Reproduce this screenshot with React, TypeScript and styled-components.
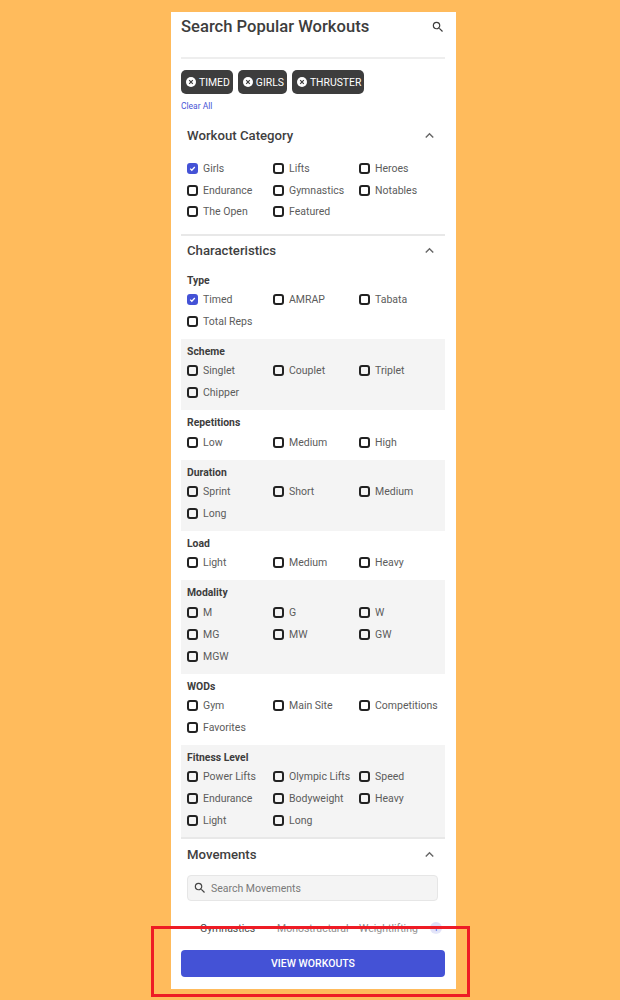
import React, { FC } from 'react';
import styled, { createGlobalStyle } from 'styled-components';
import { MdExpandLess, MdSearch } from 'react-icons/md';

const GlobalStyle = createGlobalStyle`
  html, body {
    margin: 0;
    padding: 0;
    background: #ffbb5c;
  }
  * {
    box-sizing: border-box;
  }
`;

const Page = styled.div`
  position: relative;
  width: 620px;
  height: 1000px;
  overflow: hidden;
  padding: 12px 0 0 171px;
  background: #ffbb5c;
  font-family: Roboto, 'Liberation Sans', sans-serif;
`;

const Panel = styled.div`
  position: relative;
  width: 285px;
  height: 977px;
  padding: 0 11px 0 10px;
  overflow: hidden;
  background: #fff;
`;

const TopBar = styled.div`
  display: flex;
  align-items: center;
  justify-content: space-between;
  height: 47px;
  padding: 0 0 15px 0;
  border-bottom: 2px solid #eeeeee;
  color: #3d3d3d;
`;

const Title = styled.h1`
  margin: 0;
  font-size: 16.6px;
  line-height: 30px;
  font-weight: 500;
  color: #3d3d3d;
`;

const Chips = styled.div`
  display: flex;
  gap: 5px;
  margin-top: 11px;
`;

const Chip = styled.div`
  display: flex;
  align-items: center;
  gap: 3px;
  height: 24px;
  padding: 0 3px 0 5px;
  border-radius: 5px;
  background: #3d3d3d;
  color: #fff;
  font-size: 10.4px;
`;

const ClearAll = styled.a`
  display: block;
  margin-top: 6px;
  font-size: 8.5px;
  line-height: 12px;
  color: #4a55d6;
`;

const SectionHeader = styled.div`
  display: flex;
  align-items: center;
  justify-content: space-between;
  height: 32px;
  padding: 0 7px 2px 6px;
  color: #666;
`;

const SectionTitle = styled.h2`
  margin: 0;
  font-size: 13.2px;
  font-weight: 500;
  color: #3f3f3f;
`;

const CategorySection = styled.section`
  margin-top: 8px;
  padding-bottom: 11px;
  border-bottom: 2px solid #e8e8e8;
`;

const CategoryOptions = styled.div`
  padding: 6px 6px 0;
`;

const Group = styled.div<{ $shaded?: boolean }>`
  padding: 6px 6px 6.35px;
  background: ${p => (p.$shaded ? '#f4f4f4' : '#fff')};
`;

const GroupLabel = styled.div`
  height: 15px;
  font-size: 10.4px;
  line-height: 14px;
  font-weight: 700;
  color: #3d3d3d;
`;

const OptionGrid = styled.div<{ $rowHeight: number }>`
  display: grid;
  grid-template-columns: repeat(3, 86px);
  grid-auto-rows: ${p => p.$rowHeight}px;
`;

const Option = styled.label`
  display: flex;
  align-items: center;
  gap: 5px;
  font-size: 10.5px;
  color: #5c5c5c;
  white-space: nowrap;
`;

const Box = styled.span<{ $checked?: boolean }>`
  display: flex;
  align-items: center;
  justify-content: center;
  flex: none;
  width: 11px;
  height: 11px;
  border-radius: 3px;
  border: ${p => (p.$checked ? 'none' : '2px solid #222')};
  background: ${p => (p.$checked ? '#4452d6' : 'transparent')};
`;

const MovementsSection = styled.section`
  margin-top: -1px;
  border-top: 2px solid #e8e8e8;
`;

const SearchField = styled.div`
  display: flex;
  align-items: center;
  gap: 4px;
  width: 251px;
  height: 26px;
  margin: 4px 0 0 6px;
  padding: 0 5px;
  border: 1px solid #e6e6e6;
  border-radius: 4px;
  background: #f4f4f4;
  color: #444;
  font-size: 10.5px;
`;

const Placeholder = styled.span`
  color: #7a7a7a;
`;

const Tabs = styled.div`
  display: flex;
  align-items: center;
  height: 14px;
  margin-top: 20px;
  padding-left: 19px;
  font-size: 10.5px;
  color: #888;
`;

const Tab = styled.span<{ $active?: boolean; $width: number }>`
  width: ${p => p.$width}px;
  white-space: nowrap;
  color: ${p => (p.$active ? '#444' : '#888')};
`;

const TabBadge = styled.span`
  display: flex;
  align-items: center;
  justify-content: center;
  width: 12px;
  height: 12px;
  margin-left: 6px;
  border-radius: 50%;
  background: #dfe1f8;
  color: #4452d6;
  font-size: 8px;
`;

const Footer = styled.div`
  position: absolute;
  left: 0;
  right: 0;
  bottom: 0;
  padding: 20px 11px 12px 10px;
  background: linear-gradient(to bottom, rgba(255, 255, 255, 0), #fff 14px);
`;

const ViewButton = styled.button`
  display: block;
  width: 100%;
  height: 27px;
  padding: 0;
  border: none;
  border-radius: 4px;
  background: #4452d6;
  color: #fff;
  font-family: inherit;
  font-size: 10.5px;
  font-weight: 500;
`;

const Highlight = styled.div`
  position: absolute;
  left: 151px;
  top: 926px;
  width: 319px;
  height: 71px;
  border: 3px solid #ee1c25;
  pointer-events: none;
`;

const ChipClose: FC = () => (
  <svg width="10" height="10" viewBox="0 0 10 10">
    <circle cx="5" cy="5" r="5" fill="#fff" />
    <path d="M3.2 3.2l3.6 3.6M6.8 3.2l-3.6 3.6" stroke="#3d3d3d" strokeWidth="1.2" />
  </svg>
);

const Tick: FC = () => (
  <svg width="7" height="7" viewBox="0 0 7 7">
    <path d="M1.2 3.6l1.6 1.6 3-3.2" fill="none" stroke="#fff" strokeWidth="1.3" />
  </svg>
);

interface OptionItem {
  label: string;
  checked?: boolean;
}

const Options: FC<{ items: (string | OptionItem)[]; rowHeight?: number }> = ({ items, rowHeight = 22 }) => (
  <OptionGrid $rowHeight={rowHeight}>
    {items.map(item => {
      const data = typeof item === 'string' ? { label: item } : item;
      return (
        <Option key={data.label}>
          <Box $checked={data.checked}>{data.checked && <Tick />}</Box>
          {data.label}
        </Option>
      );
    })}
  </OptionGrid>
);

const groups: { label: string; items: (string | OptionItem)[] }[] = [
  { label: 'Type', items: [{ label: 'Timed', checked: true }, 'AMRAP', 'Tabata', 'Total Reps'] },
  { label: 'Scheme', items: ['Singlet', 'Couplet', 'Triplet', 'Chipper'] },
  { label: 'Repetitions', items: ['Low', 'Medium', 'High'] },
  { label: 'Duration', items: ['Sprint', 'Short', 'Medium', 'Long'] },
  { label: 'Load', items: ['Light', 'Medium', 'Heavy'] },
  { label: 'Modality', items: ['M', 'G', 'W', 'MG', 'MW', 'GW', 'MGW'] },
  { label: 'WODs', items: ['Gym', 'Main Site', 'Competitions', 'Favorites'] },
  {
    label: 'Fitness Level',
    items: ['Power Lifts', 'Olympic Lifts', 'Speed', 'Endurance', 'Bodyweight', 'Heavy', 'Light', 'Long'],
  },
];

const App: FC = () => (
  <Page>
    <GlobalStyle />
    <Panel>
      <TopBar>
        <Title>Search Popular Workouts</Title>
        <MdSearch size={14} />
      </TopBar>
      <Chips>
        {['TIMED', 'GIRLS', 'THRUSTER'].map(chip => (
          <Chip key={chip}>
            <ChipClose />
            {chip}
          </Chip>
        ))}
      </Chips>
      <ClearAll>Clear All</ClearAll>
      <CategorySection>
        <SectionHeader>
          <SectionTitle>Workout Category</SectionTitle>
          <MdExpandLess size={17} />
        </SectionHeader>
        <CategoryOptions>
          <Options
            rowHeight={21.5}
            items={[
              { label: 'Girls', checked: true },
              'Lifts',
              'Heroes',
              'Endurance',
              'Gymnastics',
              'Notables',
              'The Open',
              'Featured',
            ]}
          />
        </CategoryOptions>
      </CategorySection>
      <section>
        <SectionHeader>
          <SectionTitle>Characteristics</SectionTitle>
          <MdExpandLess size={17} />
        </SectionHeader>
        {groups.map((group, index) => (
          <Group key={group.label} $shaded={index % 2 === 1}>
            <GroupLabel>{group.label}</GroupLabel>
            <Options items={group.items} />
          </Group>
        ))}
      </section>
      <MovementsSection>
        <SectionHeader>
          <SectionTitle>Movements</SectionTitle>
          <MdExpandLess size={17} />
        </SectionHeader>
        <SearchField>
          <MdSearch size={14} />
          <Placeholder>Search Movements</Placeholder>
        </SearchField>
        <Tabs>
          <Tab $active $width={77}>
            Gymnastics
          </Tab>
          <Tab $width={82}>Monostructural</Tab>
          <Tab $width={65}>Weightlifting</Tab>
          <TabBadge>1</TabBadge>
        </Tabs>
      </MovementsSection>
      <Footer>
        <ViewButton>VIEW WORKOUTS</ViewButton>
      </Footer>
    </Panel>
    <Highlight />
  </Page>
);

export default App;
